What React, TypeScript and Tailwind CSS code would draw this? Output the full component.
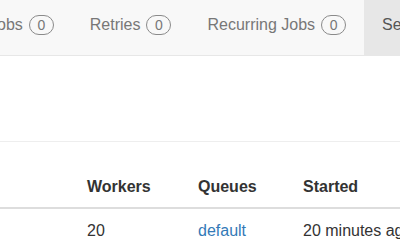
import React from 'react';

type NavTab = {
    label: string;
    count?: number;
    active?: boolean;
};

const tabs: NavTab[] = [
    { label: 'Jobs', count: 0 },
    { label: 'Retries', count: 0 },
    { label: 'Recurring Jobs', count: 0 },
    { label: 'Servers', active: true },
];

const servers = [{ name: '', workers: 20, queue: 'default', started: '20 minutes ago' }];

export default function App() {
    return (
        <div className="h-[249px] w-[400px] overflow-hidden bg-white font-['Liberation_Sans',Arial,sans-serif] text-[16px] text-[#333]">
            <nav className="h-[56px] border-b border-[#e7e7e7] bg-[#f8f8f8]">
                <ul className="-ml-[29px] flex h-[55px] whitespace-nowrap">
                    {tabs.map((tab) => (
                        <li
                            key={tab.label}
                            className={`flex h-[55px] shrink-0 items-start px-[18px] pt-[13px] ${
                                tab.active ? 'bg-[#e7e7e7] text-[#555]' : 'text-[#777]'
                            }`}
                        >
                            <div className="flex h-[23px] items-center leading-[23px]">
                                <span>{tab.label}</span>
                                {tab.count !== undefined && (
                                    <span className="ml-[6px] flex h-[20px] w-[25px] items-center justify-center rounded-full border border-[#8a8a8a] text-[14px] leading-none text-[#777]">
                                        {tab.count}
                                    </span>
                                )}
                            </div>
                        </li>
                    ))}
                </ul>
            </nav>

            <div className="h-[86px] border-b border-[#eee]" />

            <table className="mt-[24px] w-[520px] table-fixed border-collapse text-left">
                <colgroup>
                    <col className="w-[78px]" />
                    <col className="w-[111px]" />
                    <col className="w-[105px]" />
                    <col />
                </colgroup>
                <thead>
                    <tr className="border-b-2 border-[#ddd]">
                        <th className="px-[9px] pt-[9px] pb-[9px] leading-[23px] font-bold" />
                        <th className="px-[9px] pt-[9px] pb-[9px] leading-[23px] font-bold">Workers</th>
                        <th className="px-[9px] pt-[9px] pb-[9px] leading-[23px] font-bold">Queues</th>
                        <th className="px-[9px] pt-[9px] pb-[9px] leading-[23px] font-bold">Started</th>
                    </tr>
                </thead>
                <tbody>
                    {servers.map((server) => (
                        <tr key={server.queue}>
                            <td className="px-[9px] pt-[10px] pb-[9px] leading-[24px]">{server.name}</td>
                            <td className="px-[9px] pt-[10px] pb-[9px] leading-[24px]">{server.workers}</td>
                            <td className="px-[9px] pt-[10px] pb-[9px] leading-[24px]">
                                <a href="#" className="text-[#337ab7]">
                                    {server.queue}
                                </a>
                            </td>
                            <td className="whitespace-nowrap px-[9px] pt-[10px] pb-[9px] leading-[24px]">{server.started}</td>
                        </tr>
                    ))}
                </tbody>
            </table>
        </div>
    );
}
